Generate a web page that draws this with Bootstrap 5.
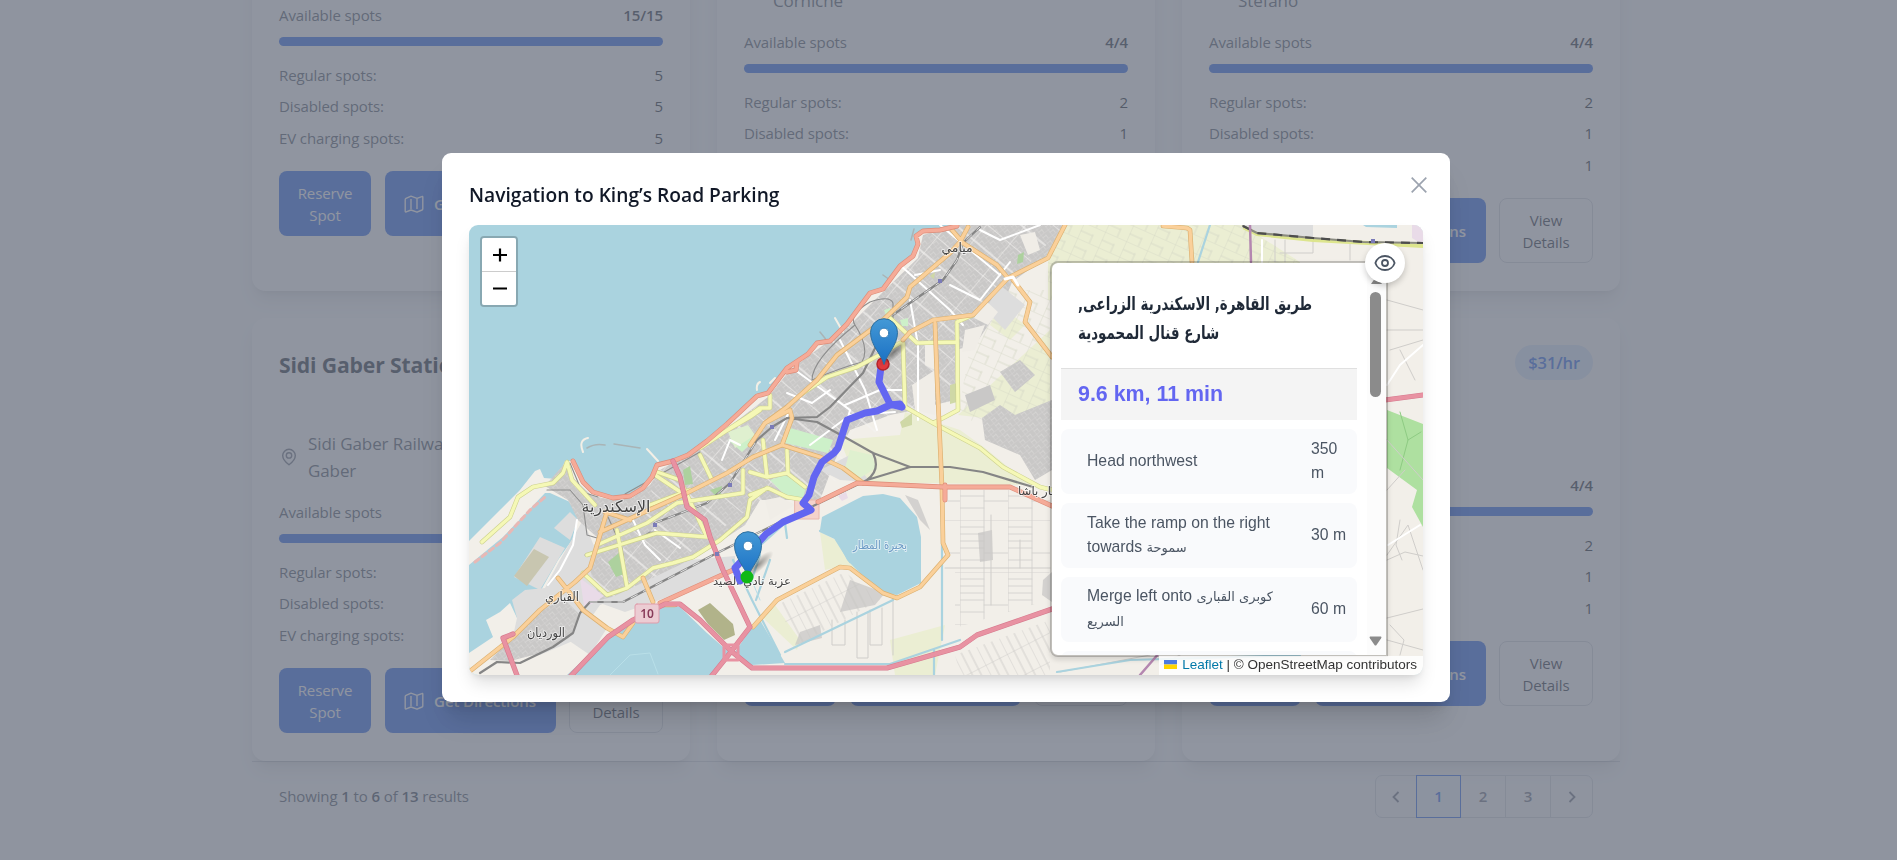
<!DOCTYPE html>
<html lang="en">
<head>
<meta charset="utf-8">
<title>Parking navigation</title>
<link href="https://cdn.jsdelivr.net/npm/bootstrap@5.3.0/dist/css/bootstrap.min.css" rel="stylesheet">
<style>
html,body{height:100%;overflow:hidden}
body{font-family:"Open Sans","Noto Sans",sans-serif;font-size:15px;letter-spacing:-.1px;line-height:22.5px;background:#f9fafb;color:#4b5563}
.page-wrap{width:1368px;margin:-152px 0 0 252px}
.lot-grid{display:grid;grid-template-columns:repeat(3,438px);gap:27px}
.lot{height:443px;padding:27px;background:#fff;border-radius:13.5px;box-shadow:0 11px 17px -3px rgba(0,0,0,.1),0 4px 7px -4px rgba(0,0,0,.1)}
.lot-head{height:84.5px}
.lot-head h3{font-size:21.2px;letter-spacing:-.15px;font-weight:700;line-height:39px;color:#1f2937;margin:0}
.price{background:#dbeafe;color:#2563eb;font-weight:600;font-size:16.5px;height:35px;line-height:35px;padding:0 13px}
.place{font-size:17px;line-height:27px;gap:9px;margin-bottom:17.5px}
.place svg{width:20px;flex:none}
.lot b,.foot b{font-weight:600;color:#1f2937}
.foot b{color:#374151}
.meter{height:9px;border-radius:9px;background:#2563eb;margin:10.5px 0 17.5px}
.kinds{display:grid;gap:9px;margin-bottom:22px}
.kinds span:last-child{color:#111827}
.acts{display:grid;grid-template-columns:92px 171px 94px;gap:13.5px;height:65px}
.acts .btn{padding:0;font-size:15px;letter-spacing:-.1px;line-height:22px;border-radius:8px;color:#fff;background:#2563eb;border:0}
.acts .btn.view{background:#fff;border:1px solid #d1d5db;color:#1f2937}
.foot{border-top:1px solid #d1d5db;padding:13px 27px;height:100px}
.pager{height:43px;border:1px solid #d1d5db;border-radius:7px;width:218px;font-weight:600;color:#6b7280}
.pager>div{border-right:1px solid #d1d5db;display:flex;align-items:center;justify-content:center;width:45px}
.pager>div:first-child,.pager>div:last-child{width:41px}
.pager>div:last-child{border:0}
.pager>.cur{border:1px solid #2563eb;margin:-1px 0 -1px -1px;color:#2563eb;background:#eff6ff}
.veil{background:rgba(107,114,128,.75);opacity:1;z-index:10}
.modal-dialog{width:1008px;max-width:none;margin:153px 0 0 442px}
.modal-content{border:0;height:549px;border-radius:9px;padding:27px;box-shadow:0 22px 28px -6px rgba(0,0,0,.14),0 9px 11px -6px rgba(0,0,0,.14)}
.modal-title{font-size:19.2px;letter-spacing:0;font-weight:600;line-height:30px;height:45px;color:#111827}
.x-close{right:23px;top:24px}
.mapbox{height:450px;border-radius:9px;letter-spacing:0;font-family:"Liberation Sans",Arial,"DejaVu Sans",sans-serif;box-shadow:0 11px 17px -3px rgba(0,0,0,.13),0 4px 7px -4px rgba(0,0,0,.13)}
.mapclip{border-radius:9px;overflow:hidden}
.zoomctl{left:11px;top:11px;width:38px;border:2px solid rgba(0,0,0,.2);border-radius:4px;background-clip:padding-box;overflow:hidden}
.zoomctl svg{display:block;background:#fff;width:34px;height:33px}
.zoomctl svg+svg{border-top:1px solid #ccc;height:34px}
.routes{left:581px;top:36px;width:338px;height:396px;border:2px solid rgba(0,0,0,.2);border-radius:8px 0 0 8px;background:#fff;background-clip:padding-box;overflow:hidden;box-shadow:0 3px 5px rgba(0,0,0,.12)}
.routes-in{width:296px;margin-left:9px}
.routes h2{font-size:18px;font-weight:700;line-height:29.3px;color:#1f2937;height:105px;padding:26px 17px 0;margin:0;font-family:"DejaVu Sans",sans-serif;white-space:nowrap}
.routes h2 span{display:block;width:max-content;transform-origin:0 50%}
.routes h3{font-size:21.400px;font-weight:700;color:#6366f1;height:52px;line-height:50px;margin:0 0 9px;padding-left:17px;background:#f4f4f4;border-top:1px solid #e0e0e0}
.step{height:65px;margin-bottom:9px;border-radius:8px;background:#f9fafc;color:#4b5563;font-size:15.75px;line-height:24px;padding-left:26px}
.step>div{position:relative;top:-.5px}
.step>div:first-child{width:224px}
.ar{font-family:"DejaVu Sans",sans-serif;font-size:13px}
.track{right:0;top:0;width:19px;height:100%;background:#fcfcfc}
.thumb{left:4px;top:29px;width:11px;height:105px;border-radius:6px;background:#8b8b8b}
.eye{left:896px;top:18px;width:40px;height:40px;border-radius:50%;background:#fff;box-shadow:0 3px 6px rgba(0,0,0,.2)}
.credit{right:0;bottom:0;height:19px;line-height:18px;font-size:13.5px;padding:0 6px 0 5px;background:rgba(255,255,255,.85);color:#333;white-space:nowrap}
.credit span{color:#0078a8}
</style>
</head>
<body>
<svg width="0" height="0" class="position-absolute"><defs>
<symbol id="i-map" viewBox="0 0 20 20"><path d="M7 5v10M13 5v10M7 2.2 2 4.4Q1.200 4.800 1.200 5.700v11.600q0 1 1 .5L7 16l6 2.200 5-2.200q.8-.4.8-1.300V3.100q0-1-1-.5L13 4.400z" fill="none" stroke="currentColor" stroke-width="1.400" stroke-linejoin="round"/></symbol>
<symbol id="i-pin" viewBox="0 0 20 20"><path d="M16.300 8.600c0 4.200-3.800 7.400-6.300 9.200-2.500-1.800-6.300-5-6.300-9.200a6.300 6.300 0 0 1 12.600 0z" fill="none" stroke="#6b7280" stroke-width="1.400"/><circle cx="10" cy="8.400" r="2.700" fill="none" stroke="#6b7280" stroke-width="1.400"/></symbol>
</defs></svg>

<div class="page-wrap">
  <div class="lot-grid" id="lots"></div>
  <div class="foot d-flex justify-content-between">
    <div style="padding-top:10px">Showing <b>1</b> to <b>6</b> of <b>13</b> results</div>
    <div class="pager d-flex">
      <div><svg width="16" height="16"><path d="M10.500 3 5.500 8l5 5" fill="none" stroke="#6b7280" stroke-width="1.800"/></svg></div>
      <div class="cur">1</div><div>2</div><div>3</div>
      <div><svg width="16" height="16"><path d="m5.500 3 5 5-5 5" fill="none" stroke="#6b7280" stroke-width="1.800"/></svg></div>
    </div>
  </div>
</div>

<div class="veil position-fixed top-0 start-0 w-100 h-100"></div>
<div class="modal d-block" tabindex="-1"><div class="modal-dialog"><div class="modal-content position-relative">
  <h4 class="modal-title mb-0">Navigation to King’s Road Parking</h4>
  <svg class="x-close position-absolute" width="16" height="16"><path d="M.7.7l14.600 14.600M15.300.7.7 15.300" stroke="#9ca3af" stroke-width="1.700"/></svg>
  <div class="mapbox position-relative"><div class="mapclip position-relative w-100 h-100">
<svg width="954" height="450" viewBox="469 225 954 450" class="d-block" fill="none" stroke-linejoin="round" stroke-linecap="round">
<defs>
<pattern id="st" width="9" height="7" patternUnits="userSpaceOnUse" patternTransform="rotate(-38)"><path d="M0 0H9M0 0V7M4.500 3V7M0 3.500H4.500" stroke="#d8d7d5" stroke-width=".7"/></pattern>
<pattern id="st2" width="42" height="30" patternUnits="userSpaceOnUse" patternTransform="rotate(-50)"><path d="M0 0H42M0 0V30M22 0V30" stroke="#f3f2f0" stroke-width="1.200"/></pattern>
<pattern id="fld" width="23" height="17" patternUnits="userSpaceOnUse" patternTransform="rotate(24)"><path d="M0 0H23M0 0V17M13 8V17M0 9H13" stroke="#d6d8c6" stroke-width=".8"/></pattern>
<pattern id="plots" width="48" height="52" patternUnits="userSpaceOnUse"><path d="M0 0H48M0 0V52M24 0V52M0 7H24M0 14H24M0 21H24M0 28H24M24 33H48M0 40H24" stroke="#d3d1ce" stroke-width=".9"/></pattern>
<pattern id="plotd" width="24" height="26" patternUnits="userSpaceOnUse" patternTransform="rotate(-27)"><path d="M0 0H24M0 0V26M8 0V26M16 0V26" stroke="#cfcdca" stroke-width=".9"/></pattern>
<linearGradient id="mk" x2="0" y2="1"><stop stop-color="#4499d6"/><stop offset="1" stop-color="#1a70c4"/></linearGradient>
<radialGradient id="sh"><stop stop-opacity=".4"/><stop offset="1" stop-opacity="0"/></radialGradient>
<g id="marker"><ellipse cx="10" cy="-12" rx="20" ry="6" transform="rotate(-42 10 -12)" fill="url(#sh)"/><path d="M0 0C-3-10-13.500-19-13.500-31.500a13.500 13.800 0 0 1 27 0C13.500-19 3-10 0 0z" fill="url(#mk)" stroke="#2d6f9f" stroke-width="1"/><circle cy="-31" r="4.800" fill="#fff" stroke="#2671ad" stroke-width=".8"/></g>
<path id="town" d="M545 486 565 463 575 480 592 496 613 500 632 498 650 485 660 470 707 444 768 397 790 370 850 325 884 291 918 258 923 235 957 225H1065L1045 258 1012 282 1005 300 975 345 955 350 955 400 905 412 890 415 850 430 835 460 820 500 760 500 745 525 700 555 640 590 600 600 590 570 600 540 578 520 568 500z"/>
<path id="secondary" d="M482 542 510 517 518 497 533 487 553 483 563 473 567 462 572 480 595 505M597 545 647 523 677 503 743 493V470M587 555 657 533 707 537 680 480 657 472M583 573 607 595 627 588 653 568 673 563 693 557 720 540 747 517 750 500 767 488M617 530 627 587M700 448 747 417 760 408H770V395M650 505 690 490M655 475 685 495M700 455 712 480M803 393 827 377 857 367 883 353 900 343M890 318 917 343 957 342M903 343 905 407 933 423 980 448 1003 467 1040 487 1052 490M973 315 957 322 958 410 945 417 933 423M763 440 767 477M750 472 767 477 787 473 805 487M787 450 788 473M750 495 768 488 787 497 805 500M760 410 750 417 707 442"/>
<path id="primary" d="M469 672 513 637 540 610 575 582 590 568 597 545 606 515M558 578 570 593 583 610 607 628 623 637 633 623M643 578 653 602M600 532 687 493 727 473 753 457 782 445 820 457 843 468 863 483M750 445 765 423 787 407 817 380 837 355 880 323 907 297 910 287 950 253 960 242 968 227M952 230 963 243 997 265 1008 278 1048 258 1065 225M1013 280 1030 302 1025 322 1052 357M903 340 910 332 933 320 973 315 1008 278M935 323 937 377 940 443 942 487 943 543 948 555 920 587 897 598 883 593 850 568 840 567 777 600 753 627M1163 226 1187 228 1190 230 1192 262M605 512 630 520M765 423 790 410 792 418 782 445M660 605 675 605"/>
<path id="trunk" d="M573 461 583 482 593 492 613 498 630 496 643 488 652 477 657 465 673 461 688 455 707 441 727 424 757 396 768 393 787 368 808 354 817 343 830 341 847 324 870 293 883 289 900 266 913 256 918 244 916 236 923 231 940 230 957 226M818 502 857 483 943 487 1010 487 1052 506M660 603 733 570M787 372 796 370 797 362M945 485V500"/>
<path id="mway" d="M567 680 608 637 633 620 665 604 680 604 700 620 731 651 752 668H887L960 647 977 635 1052 609M1385 400 1423 395M673 461 680 477 687 507 705 520 710 537 723 570 750 627 730 653 710 678M513 634 503 638 518 678"/>
</defs>
<rect x="469" y="225" width="954" height="450" fill="#aad3df"/>
<!-- land -->
<path fill="#f2efe9" d="M469 541 520 490 535 471 540 469 544 478 557 479 565 461 573 461 575 465 583 482 593 492 613 497 630 495 643 487 652 477 657 465 673 460 688 455 707 440 727 423 757 395 768 393 787 367 808 353 817 342 830 340 847 323 870 292 883 288 900 265 913 255 918 243 916 235 923 231 940 230 957 225H1423V675H710L730 653 707 633 680 607 667 605 633 620 608 637 567 675H469V653L493 637 486 620 500 612 510 603 517 618 530 610 545 583 558 560 572 540 579 515 570 502 550 493 545 493 527 512 503 537 469 565z"/>
<path fill="#ddd" d="M517 618 512 600 525 590 545 588 560 560 583 520 600 560 640 590 600 605 575 640 540 655 510 650z M540 537 565 548 540 590 514 577z M554 528 570 512 578 520 570 540z"/>
<path fill="#c8c6b0" d="M534 549 549 557 527 586 514 576z"/>
<!-- fields -->
<path fill="#ebeed3" d="M1065 225H1242L1300 262V300H1048V262z M1000 305 1025 325 1010 340 990 325z M958 415 1050 330V430L1030 445 985 418z M905 412 960 430 985 448 1030 485 870 482 850 465 840 440 900 435z M820 532 840 542 862 573 845 565 825 570z M760 615 775 605 800 640 797 650z M890 640 945 625 935 675H895z"/>
<path fill="url(#fld)" d="M1065 225H1242L1300 262V300H1048V262z M980 290H1050V430L1030 445 958 415z"/>
<!-- built-up districts -->
<use href="#town" fill="#c9c8c7"/><use href="#town" fill="url(#st)"/>
<path fill="url(#st2)" d="M660 470 707 444 768 397 790 370 850 325 884 291 918 258 923 235 957 225H1065L1012 282 955 350V400L890 415 820 500 760 500 640 590 600 600 590 570 640 520z"/>
<path fill="#c9c8c7" d="M540 610 565 600 580 615 572 636 545 652 510 661 490 660z M982 418 1000 405 1015 415 1052 400V470L1035 480 1020 455 985 440z M1000 372 1020 360 1035 375 1015 392z M965 395 990 385 995 400 970 412z"/><path fill="url(#st)" d="M540 610 565 600 580 615 572 636 545 652 510 661 490 660z M982 418 1000 405 1015 415 1052 400V470L1035 480 1020 455 985 440z M1000 372 1020 360 1035 375 1015 392z"/>
<path fill="#ddd" d="M583 612 607 628 590 655 568 640z M600 603 690 560 735 556 735 568 665 598 625 612z M850 455 870 482 840 480 820 470z M1000 285 1025 305 1005 330 985 310z M1243 225H1313V238L1257 233z"/>
<path fill="#f0ede7" d="M985 300 998 312 988 325 974 318z M912 385 935 370 935 415 915 410z M925 345 935 345V370L925 365z M1020 235 1035 232 1040 250 1028 255z M965 330 985 325 975 350 962 352z M765 500 780 497 795 505 770 520z"/>
<path fill="#e9dbe8" d="M580 578 604 596 592 604 584 606z M1412 225H1423V245L1412 238z M838 496 846 492 848 498 842 501z"/>
<path fill="#cdf0c9" d="M790 428 833 440 828 453 785 443z M770 480 785 475 806 487 803 498 785 495z M728 440 745 430 757 438 742 452z M900 320 908 318 908 326 902 326z M884 310 890 308 891 314 886 315z"/>
<path fill="#dff0cf" d="M850 450 872 455 876 468 860 478 845 468z M728 432 748 425 755 435 735 448z"/>
<path fill="#add19e" d="M608 562 620 552 624 574 616 577z M683 470 690 466 693 484 685 485z M710 490 722 486 720 500z M1018 255 1024 252 1023 262 1017 264z"/>
<path fill="#cfd8a6" d="M950 385 957 383 957 402 950 404z M900 422 912 413 912 425 902 428z M930 276 935 272 934 279z"/>
<path fill="#b1b38a" d="M698 610 710 603 733 624 735 635 724 640 708 624z"/>
<path fill="#aee0a0" d="M1387 410 1423 424V527L1412 507 1417 490 1387 468z"/><path stroke="#8ecb83" d="M1400 412 1408 440 1400 470M1408 440 1421 432"/>
<rect x="795" y="500" width="24" height="19" fill="#f4d3cb" stroke="#e8b8ae"/>
<!-- rural plots -->
<path fill="url(#plots)" d="M943 490H1050V560L1048 600 955 628V560H945z"/>
<path fill="url(#plotd)" d="M777 605 845 572 880 600 797 645z M955 655 1050 620V675H960z"/>
<path fill="#c6c5c3" opacity=".7" d="M850 580 885 593 875 605 840 612z M800 632 820 625 822 638 795 645z M978 533 992 530 993 560 980 562z M905 495 918 500 930 530 920 520z M1043 580 1052 572V602L1042 595z"/>
<path stroke="#cfcdca" d="M857 612V658H868V612M870 610V645H882V608M893 600V655M832 620V645H845V620M991 515V605M945 568H1050M1020 540V568M1387 300 1423 310M1350 260V240M1387 440 1423 480M1387 560 1405 552 1423 556M1400 520 1396 545 1402 560M1387 618 1423 609M1387 490 1405 470M1285 240V262M1423 570 1408 525 1387 555M1387 640 1423 650M1390 625 1404 640 1400 655M1160 665 1210 640M1060 672 1150 655M1387 330H1423M1400 350 1415 380M1390 350 1423 340M1275 240V262M1313 240V253H1280"/>
<!-- water -->
<path fill="#aad3df" d="M822 517 863 496 883 494 900 498 917 517 921 537V583L897 595 883 593 860 573 847 560 837 540 820 530z M733 655 750 630 760 620 785 663 752 665z M1363 225H1397V228L1366 227z"/>
<path stroke="#aad3df" stroke-width="2.200" d="M785 652 893 600M942 500V640M934 650V675M820 531 835 538 850 562M755 550 783 525M785 523 787 538M760 555 750 585M770 560 756 600M733 560 752 600 780 655M785 664H890L960 640M1057 672 1130 660 1300 655M1210 225 1198 262"/>
<path stroke="#b9dfe8" d="M735 540 760 600M745 540 775 530M610 675 630 655 650 653 658 674"/>
<path stroke="#f3efe6" stroke-width="2" d="M588 438Q578 440 583 452M647 449 658 461M757 390Q756 384 760 382M770 383 775 378M835 318 843 332"/>
<path stroke="#a9b4b6" stroke-width="1.500" d="M587 448Q595 443 605 445M614 444 640 448M883 275 890 280M820 332 828 342M911 240 914 229"/>
<path stroke="#e8b8b5" stroke-width="3" d="M475 562 500 543 530 510 545 497" stroke-dasharray="5 4"/>
<!-- minor roads -->
<path stroke="#fff" stroke-width="2" d="M577 520 573 545 560 570 548 585M633 520 645 545 660 560M655 530 680 548M740 445 730 440 722 460M787 393 812 403 830 390M840 340 865 390 877 430M795 370 850 410 845 430M910 300 918 345V420M900 265 950 310 963 325M940 225 1000 275M1010 262 980 300 950 285M980 230 1000 240 1040 225M915 275 940 270M870 330 900 310M775 440 790 410M845 405 880 390 905 390M1387 385 1400 365 1423 345M1262 262V240M1388 545 1420 525M810 445 850 415 895 412"/>
<!-- rail -->
<path stroke="#858585" stroke-width="2.200" d="M480 673 497 662 520 663 553 647 573 633 580 613 590 602 623 602 717 553 780 522 867 480 910 467 950 467 983 472 1033 487M655 523 707 503 730 483 757 440 772 427 787 418 817 417 830 407 863 373 890 317 917 298 943 280 957 260 963 243 980 227M787 418 817 422 850 440 873 453 910 467M873 453Q881 470 867 480"/>
<path stroke="#e0e0e0" stroke-width="1" stroke-dasharray="7 7" d="M590 602 623 602 717 553 780 522 867 480M655 523 707 503 730 483 757 440M890 317 917 298 943 280 957 260 963 243 980 227"/>
<path stroke="#8d8d8d" stroke-width="1.100" d="M700 452 650 480 625 494M855 325Q848 315 870 302 890 295 893 303V318M855 325Q870 348 862 362 840 368 812 380M812 380Q812 360 855 325M570 463 582 492 598 497M547 490 570 490 583 505 587 535 597 538M585 555 637 540 650 532 700 537M608 517 622 548 627 585"/>
<path stroke="#dde58e" stroke-width="4" d="M1245 228 1257 234 1313 240 1423 246"/><path stroke="#8a8a80" stroke-width="2.200" d="M1243 226 1257 233 1313 238 1363 242 1423 243"/><path stroke="#4d4d4d" stroke-width="2.200" stroke-dasharray="9 7" stroke-linecap="butt" d="M1243 226 1257 233 1313 238 1363 242 1423 243"/>
<path stroke="#b487b0" stroke-width="2.500" d="M1250 225 1251 262M1140 675 1160 652"/>
<use href="#secondary" stroke="#cdd18f" stroke-width="4.600"/><use href="#secondary" stroke="#f5f8b6" stroke-width="3.400"/>
<use href="#primary" stroke="#dcb070" stroke-width="4.700"/><use href="#primary" stroke="#fad09a" stroke-width="3.400"/>
<path stroke="#fff" stroke-width="3" d="M1005 279 1013 277 1018 285"/>
<use href="#trunk" stroke="#dd8c78" stroke-width="4.900"/><use href="#trunk" stroke="#f5ab98" stroke-width="3.700"/>
<use href="#mway" stroke="#d67a8e" stroke-width="5.200"/><use href="#mway" stroke="#e892a2" stroke-width="4"/>
<path stroke="#e892a2" stroke-width="3" d="M724 645H738V660H724z"/>
<!-- stations -->
<path fill="#7a7ab8" d="M653 523h4v4h-4zM728 483h4v4h-4zM715 552h4v4h-4zM770 425h4v4h-4zM938 279h4v4h-4zM1371 239h4v4h-4z"/>
<!-- labels -->
<g font-family="DejaVu Sans,sans-serif" fill="#444" stroke="#fff" stroke-opacity=".6" stroke-width="2" paint-order="stroke" text-anchor="middle">
<text x="957" y="252" font-size="12.500" textLength="31" lengthAdjust="spacingAndGlyphs">ميامي</text>
<text x="616" y="512" font-size="16" textLength="69" lengthAdjust="spacingAndGlyphs">الإسكندرية</text>
<text x="562" y="601" font-size="12.500" textLength="34" lengthAdjust="spacingAndGlyphs">القباري</text>
<text x="546" y="637" font-size="12.500" textLength="38" lengthAdjust="spacingAndGlyphs">الورديان</text>
<text x="752" y="585" font-size="12" textLength="78" lengthAdjust="spacingAndGlyphs">عزبة نادي الصيد</text>
<text x="880" y="549" font-size="12" fill="#6d9bc6" textLength="54" lengthAdjust="spacingAndGlyphs">بحيرة المطار</text>
<text x="1040" y="495" font-size="12" textLength="44" lengthAdjust="spacingAndGlyphs">خبار باشا</text>
</g>
<rect x="635" y="604" width="24" height="19" rx="2" fill="#ecccd3" stroke="#df9cab"/><text x="647" y="618" font-family="Noto Sans" font-weight="600" font-size="12" fill="#883b59" text-anchor="middle">10</text>
<!-- route -->
<path stroke="#6366f1" stroke-width="7" d="M902 407 890 404 879 382 881 367M902 407 900 404 890 405 877 411 865 413 847 420 838 448 834 453 822 462 814 477 809 495 803 503 811 510 783 522 766 534 750 552 735 568 740 581"/>
<circle cx="883" cy="364" r="6" fill="#e03a3e" stroke="#b3252b" stroke-width="1.500"/>
<use href="#marker" x="884" y="364"/>
<use href="#marker" x="748" y="577"/>
<circle cx="747" cy="577" r="6.500" fill="#0fb916"/>
</svg>
    <div class="zoomctl position-absolute"><svg viewBox="0 0 34 33"><path d="M11 17h14M18 10.500v13" stroke="#000" stroke-width="2.200"/></svg><svg viewBox="0 0 34 33"><path d="M11 16.500h14" stroke="#000" stroke-width="2.200"/></svg></div>
    <div class="routes position-absolute">
      <div class="routes-in">
        <h2><span id="r1" dir="rtl">طريق القاهرة, الاسكندرية الزراعى,</span><span id="r2" dir="rtl">شارع قنال المحمودية</span></h2>
        <h3>9.6 km, 11 min</h3>
        <div class="step d-flex align-items-center"><div>Head northwest</div><div>350<br>m</div></div>
        <div class="step d-flex align-items-center"><div>Take the ramp on the right<br>towards <span class="ar">سموحة</span></div><div>30 m</div></div>
        <div class="step d-flex align-items-center"><div>Merge left onto <span class="ar">كوبرى القبارى<br>السريع</span></div><div>60 m</div></div>
        <div class="step"></div>
      </div>
      <div class="track position-absolute"><svg class="position-absolute" style="left:3px;top:13px" width="13" height="9"><path d="M1 8 6.500 0 12 8z" fill="#8b8b8b"/></svg><div class="thumb position-absolute" style="left:3px"></div><svg class="position-absolute" style="left:2px;bottom:9px" width="13" height="10"><path d="M1 .5H12Q13 1 12 2.500L7.500 9Q6.500 10 5.500 9L1 2.500Q0 1 1 .5z" fill="#8b8b8b"/></svg></div>
    </div>
    <div class="eye position-absolute d-flex align-items-center justify-content-center"><svg width="22" height="22" viewBox="0 0 22 22" fill="none" stroke="#4b5563" stroke-width="1.800"><path d="M1.400 11C2.600 7 6.500 4 11 4s8.400 3 9.600 7c-1.200 4-5.100 7-9.600 7s-8.400-3-9.600-7z"/><circle cx="11" cy="11" r="3"/></svg></div>
    <div class="credit position-absolute"><svg width="13" height="9" style="margin-right:5px;vertical-align:0"><path fill="#4c7be1" d="M0 0h13v4.500H0z"/><path fill="#ffd500" d="M0 4.500h13V9H0z"/></svg><span>Leaflet</span> | © OpenStreetMap contributors</div>
  </div></div>
</div></div></div>

<script src="https://cdn.jsdelivr.net/npm/bootstrap@5.3.0/dist/js/bootstrap.bundle.min.js"></script>
<script>
const lots=[
 {n:'',p:'',a:'',t:'15/15',k:[5,5,5]},
 {n:'',p:'',a:'<br>Corniche',t:'4/4',k:[2,1,1]},
 {n:'',p:'',a:'<br>Stefano',t:'4/4',k:[2,1,1]},
 {n:'Sidi Gaber Station',p:'',a:'Sidi Gaber Railway Station, Sidi<br>Gaber',t:'',k:['','','']},
 {n:'',p:'',a:'',t:'',k:['','','']},
 {n:'',p:'$31/hr',a:'',t:'4/4',k:[2,1,1]}];
const kinds=['Regular spots:','Disabled spots:','EV charging spots:'];
document.getElementById('lots').innerHTML=lots.map(l=>`<div class="lot">
 <div class="lot-head d-flex justify-content-between align-items-start"><h3>${l.n}</h3>${l.p?`<span class="price rounded-pill">${l.p}</span>`:''}</div>
 <div class="place d-flex align-items-center"><svg height="20"><use href="#i-pin"/></svg><div>${l.a||'&nbsp;'}</div></div>
 <div class="d-flex justify-content-between"><span>Available spots</span><b>${l.t}</b></div>
 <div class="meter"></div>
 <div class="kinds">${kinds.map((k,i)=>`<div class="d-flex justify-content-between"><span>${k}</span><span>${l.k[i]}</span></div>`).join('')}</div>
 <div class="acts"><button class="btn">Reserve<br>Spot</button><button class="btn d-flex align-items-center justify-content-center fw-semibold"><svg width="20" height="20" style="margin-right:10px"><use href="#i-map"/></svg>Get Directions</button><button class="btn view">View<br>Details</button></div>
</div>`).join('');
[['r1',234],['r2',141]].forEach(([id,w])=>{const e=document.getElementById(id);e.style.transform=`scaleX(${w/e.offsetWidth})`;});
</script>
</body>
</html>
